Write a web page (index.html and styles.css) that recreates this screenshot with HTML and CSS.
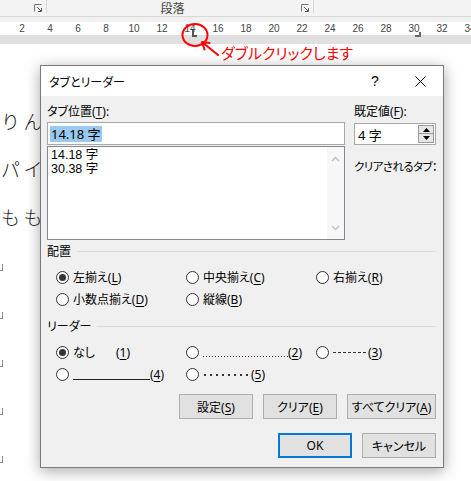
FILE: index.html
```html
<!DOCTYPE html>
<html lang="ja">
<head>
<meta charset="utf-8">
<title>タブとリーダー</title>
<link rel="stylesheet" href="styles.css">
</head>
<body>
<div class="ribbon">
  <div class="group g1"><span class="launcher"><svg width="8" height="8" viewBox="0 0 8 8"><path d="M0.5 7.5V0.5H7.5" fill="none" stroke="#777" stroke-width="1"/><path d="M3 3L7 7M4 7.5H7.5V4" fill="none" stroke="#555" stroke-width="1"/></svg></span></div>
  <div class="group g2"><span class="group-label">段落</span><span class="launcher"><svg width="8" height="8" viewBox="0 0 8 8"><path d="M0.5 7.5V0.5H7.5" fill="none" stroke="#777" stroke-width="1"/><path d="M3 3L7 7M4 7.5H7.5V4" fill="none" stroke="#555" stroke-width="1"/></svg></span></div>
</div>
<div class="ribbon-gap"></div>
<div class="ruler">
  <div class="ticks">
    <span>2</span><span>4</span><span>6</span><span>8</span><span>10</span><span>12</span><span>14</span><span>16</span><span>18</span><span>20</span><span>22</span><span>24</span><span>26</span><span>28</span><span>30</span><span>32</span><span>34</span>
  </div>
  <span class="tab-left"></span>
  <span class="tab-right"></span>
</div>
<div class="ruler-band"></div>
<div class="doc">
  <div class="line">りん</div>
  <div class="line">パイ</div>
  <div class="line">もも</div>
  <div class="line"><span class="mark"></span></div>
  <div class="line"><span class="mark"></span></div>
  <div class="line"><span class="mark"></span></div>
  <div class="line"><span class="mark"></span></div>
  <div class="line"><span class="mark"></span></div>
</div>

<svg class="annot-shapes" width="471" height="481" viewBox="0 0 471 481">
  <ellipse cx="195" cy="35" rx="12.5" ry="11" fill="none" stroke="#ff0000" stroke-width="2"/>
  <path d="M218 55L202 42M204.5 49.5L202 42L209.5 43" fill="none" stroke="#ff0000" stroke-width="2" stroke-linecap="round" stroke-linejoin="round"/>
</svg>
<div class="annot-text">ダブルクリックします</div>

<div class="dialog">
  <div class="titlebar">
    <span class="title">タブとリーダー</span>
    <span class="tb-btn help">?</span>
    <span class="tb-btn close"><svg width="11" height="11" viewBox="0 0 11 11"><path d="M0.5 0.5L10.5 10.5M10.5 0.5L0.5 10.5" stroke="#000" stroke-width="1"/></svg></span>
  </div>
  <div class="dlg-body">
    <div class="top">
      <div class="col-left">
        <div class="label">タブ位置(<u>T</u>):</div>
        <div class="input"><span class="sel">14.18 字</span></div>
        <div class="list">
          <div class="items">
            <div class="item">14.18 字</div>
            <div class="item">30.38 字</div>
          </div>
          <div class="scrollbar">
            <svg width="9" height="6" viewBox="0 0 9 6"><path d="M1 5L4.5 1.5L8 5" fill="none" stroke="#c4c4c4" stroke-width="1.5"/></svg>
            <svg width="9" height="6" viewBox="0 0 9 6"><path d="M1 1L4.5 4.5L8 1" fill="none" stroke="#c4c4c4" stroke-width="1.5"/></svg>
          </div>
        </div>
      </div>
      <div class="col-right">
        <div class="label">既定値(<u>F</u>):</div>
        <div class="spinner">
          <span class="spin-val">4 字</span>
          <div class="spin-btns">
            <span class="spin-btn"><svg width="7" height="4" viewBox="0 0 7 4"><path d="M0 4L3.5 0L7 4Z" fill="#000"/></svg></span>
            <span class="spin-btn"><svg width="7" height="4" viewBox="0 0 7 4"><path d="M0 0L3.5 4L7 0Z" fill="#000"/></svg></span>
          </div>
        </div>
        <div class="label clear-label">クリアされるタブ：</div>
      </div>
    </div>

    <div class="section"><span class="section-label">配置</span><span class="rule"></span></div>
    <div class="options">
      <div class="opt"><span class="radio checked"></span>左揃え(<u>L</u>)</div>
      <div class="opt"><span class="radio"></span>中央揃え(<u>C</u>)</div>
      <div class="opt"><span class="radio"></span>右揃え(<u>R</u>)</div>
      <div class="opt"><span class="radio"></span>小数点揃え(<u>D</u>)</div>
      <div class="opt"><span class="radio"></span>縦線(<u>B</u>)</div>
    </div>

    <div class="section section-leader"><span class="section-label">リーダー</span><span class="rule"></span></div>
    <div class="options">
      <div class="opt"><span class="radio checked"></span><span class="none-label">なし</span>(<u>1</u>)</div>
      <div class="opt"><span class="radio"></span><span class="lead lead-dots"></span>(<u>2</u>)</div>
      <div class="opt"><span class="radio"></span><span class="lead lead-dash"></span>(<u>3</u>)</div>
      <div class="opt"><span class="radio"></span><span class="lead lead-under"></span>(<u>4</u>)</div>
      <div class="opt"><span class="radio"></span><span class="lead lead-mid"></span>(<u>5</u>)</div>
    </div>

    <div class="btn-row">
      <button class="btn w74">設定(<u>S</u>)</button>
      <button class="btn w74">クリア(<u>E</u>)</button>
      <button class="btn w89">すべてクリア(<u>A</u>)</button>
    </div>
    <div class="btn-row ok-row">
      <button class="btn w74 default">OK</button>
      <button class="btn w74">キャンセル</button>
    </div>
  </div>
</div>
</body>
</html>
```

FILE: styles.css
```css
* { box-sizing: border-box; }
html, body { margin: 0; padding: 0; }
body {
  width: 471px;
  height: 481px;
  overflow: hidden;
  position: relative;
  background: #fff;
  font-family: "Noto Sans", "Noto Sans CJK JP", sans-serif;
  color: #000;
}

/* ribbon */
.ribbon {
  height: 17px;
  display: flex;
  background: #f3f3f3;
  border-bottom: 1px solid #d8d8d8;
}
.group {
  height: 13px;
  display: flex;
  align-items: flex-start;
  border-right: 1px solid #d8d8d8;
}
.g1 { width: 47px; }
.g2 { width: 267px; }
.launcher {
  display: block;
  width: 8px;
  height: 8px;
  margin: 4px 4px 0 auto;
}
.launcher svg { display: block; }
.group-label {
  flex: 1;
  text-align: center;
  padding-right: 3px;
  font-family: "Noto Sans CJK JP", sans-serif;
  font-size: 12px;
  line-height: 16px;
  color: #444;
}
.g2 .launcher { margin-left: 0; }

.ribbon-gap { height: 5px; background: #f0f0f0; }

.ruler {
  position: relative;
  height: 13px;
  background: #fff;
  z-index: 1;
}
.ticks {
  display: flex;
  padding-left: 8px;
  white-space: nowrap;
  overflow: hidden;
  width: 471px;
}
.ticks span {
  flex: 0 0 28px;
  text-align: center;
  font-family: "Liberation Sans", sans-serif;
  font-size: 10px;
  line-height: 13px;
  color: #444;
}
.tab-left {
  position: absolute;
  left: 192px;
  top: 8px;
  width: 5px;
  height: 7px;
  border-left: 2px solid #555;
  border-bottom: 2px solid #555;
}
.tab-right {
  position: absolute;
  left: 415px;
  top: 10px;
  width: 6px;
  height: 5px;
  border-right: 2px solid #666;
  border-bottom: 2px solid #666;
}
.ruler-band { height: 9px; background: #e0e0e0; }

/* document */
.doc {
  padding-top: 52px;
}
.line {
  height: 48px;
  display: flex;
  align-items: center;
  padding-left: 1px;
  font-family: "Noto Sans CJK JP", sans-serif;
  font-weight: 300;
  font-size: 19px;
  letter-spacing: 3.5px;
  color: #222;
  white-space: nowrap;
}
.mark {
  display: block;
  width: 3px;
  height: 7px;
  margin-left: -1px;
  margin-top: 6px;
  border-right: 1px solid #8a8a8a;
  border-bottom: 1px solid #8a8a8a;
}

/* annotation */
.annot-shapes {
  position: absolute;
  left: 0;
  top: 0;
  pointer-events: none;
  z-index: 2;
}
.annot-text {
  position: absolute;
  left: 221px;
  top: 44px;
  font-family: "Noto Sans CJK JP", sans-serif;
  font-size: 15px;
  line-height: 18px;
  font-feature-settings: "palt";
  color: #ff0000;
  white-space: nowrap;
}

/* dialog */
.dialog {
  position: absolute;
  left: 40px;
  top: 65px;
  width: 404px;
  height: 403px;
  border: 1px solid #7a7a7a;
  background: #f0f0f0;
  box-shadow: 0 3px 14px rgba(0, 0, 0, 0.35);
  font-family: "Noto Sans", "Noto Sans CJK JP", sans-serif;
  font-size: 12px;
  z-index: 3;
}
.titlebar {
  height: 30px;
  background: #fff;
  display: flex;
  align-items: center;
}
.title {
  flex: 1;
  padding-left: 8px;
  font-size: 12px;
  font-family: "Noto Sans CJK JP", sans-serif;
  font-feature-settings: "palt";
}
.tb-btn {
  width: 46px;
  height: 30px;
  display: flex;
  align-items: center;
  justify-content: center;
}
.help { font-size: 14px; font-family: "Liberation Sans", sans-serif; padding-left: 2px; }
.close svg { display: block; }

.dlg-body {
  padding: 8px 7px 0 6px;
}
.top {
  display: grid;
  grid-template-columns: 298px 82px;
  column-gap: 9px;
}
.label {
  line-height: 16px;
  height: 16px;
  font-size: 12px;
  white-space: nowrap;
  font-feature-settings: "palt";
}
u { text-underline-offset: 2px; text-decoration-thickness: 1px; }

.input {
  margin-top: 2px;
  height: 23px;
  border: 1px solid #a8a8a8;
  background: #fff;
  padding: 2px 0 0 2px;
  font-size: 13px;
}
.sel {
  display: inline-block;
  background: #99c9ef;
  line-height: 16px;
  padding: 0 1px;
}
.list {
  margin-top: 1px;
  height: 94px;
  border: 1px solid #828790;
  background: #fff;
  display: flex;
}
.items {
  flex: 1;
  padding: 1px 0 0 3px;
  font-family: "Liberation Sans", "Noto Sans CJK JP", sans-serif;
  font-size: 12.5px;
}
.item { line-height: 14px; height: 14px; }
.scrollbar {
  width: 17px;
  background: #f7f7f7;
  display: flex;
  flex-direction: column;
  justify-content: space-between;
  align-items: center;
  padding: 9px 0 8px;
}
.scrollbar svg { display: block; }

.spinner {
  margin-top: 3px;
  height: 22px;
  border: 1px solid #a8a8a8;
  background: #fff;
  display: flex;
  align-items: center;
}
.spin-val { flex: 1; padding-left: 3px; font-size: 13px; }
.spin-btns {
  width: 16px;
  margin-right: 1px;
  display: flex;
  flex-direction: column;
}
.spin-btn {
  height: 9px;
  border: 1px solid #9a9a9a;
  background: #e6e6e6;
  display: flex;
  align-items: center;
  justify-content: center;
}
.spin-btn + .spin-btn { border-top: none; }
.spin-btn svg { display: block; }
.clear-label { margin-top: 14px; letter-spacing: -0.6px; font-size: 11.5px; }

.section {
  margin-top: 3px;
  display: flex;
  align-items: center;
  height: 16px;
}
.section-label { line-height: 16px; white-space: nowrap; font-family: "Noto Sans CJK JP", sans-serif; font-feature-settings: "palt"; }
.rule {
  flex: 1;
  height: 1px;
  margin-left: 6px;
  background: #dcdcdc;
}
.section-leader { margin-top: 8px; }

.options {
  margin-top: 7px;
  padding-left: 9px;
  display: grid;
  grid-template-columns: 130px 130px 130px;
  grid-auto-rows: 22px;
}
.opt {
  display: flex;
  align-items: center;
  white-space: nowrap;
  font-size: 12px;
  font-feature-settings: "palt";
}
.radio {
  width: 13px;
  height: 13px;
  border: 1px solid #333;
  border-radius: 50%;
  background: #fff;
  margin-right: 4px;
  display: flex;
  align-items: center;
  justify-content: center;
}
.radio.checked::after {
  content: "";
  width: 7px;
  height: 7px;
  border-radius: 50%;
  background: #333;
}
.none-label { width: 43px; }
.lead { display: block; height: 14px; }
.lead-dots {
  width: 85px;
  background-image: repeating-linear-gradient(to right, #4a3218 0 1px, transparent 1px 3px);
  background-repeat: no-repeat;
  background-position: 0 11px;
  background-size: 100% 1px;
}
.lead-dash {
  width: 35px;
  background-image: repeating-linear-gradient(to right, #333 0 3px, transparent 3px 5px);
  background-repeat: no-repeat;
  background-position: 0 7px;
  background-size: 100% 1px;
}
.lead-under {
  width: 77px;
  background-image: linear-gradient(#222, #222);
  background-repeat: no-repeat;
  background-position: 0 12px;
  background-size: 100% 1px;
}
.lead-mid {
  width: 48px;
  background-image: repeating-linear-gradient(to right, #333 0 2px, transparent 2px 6px);
  background-repeat: no-repeat;
  background-position: 1px 7px;
  background-size: 100% 2px;
}

.btn-row {
  margin-top: 9px;
  display: flex;
  justify-content: flex-end;
  gap: 10px;
}
.ok-row { margin-top: 14px; }
.btn {
  height: 25px;
  border: 1px solid #adadad;
  background: #e1e1e1;
  font-family: "Noto Sans", "Noto Sans CJK JP", sans-serif;
  font-size: 12px;
  font-feature-settings: "palt";
  color: #000;
  padding: 0;
  white-space: nowrap;
}
.w74 { width: 74px; }
.w89 { width: 89px; }
.btn.default { border: 2px solid #0078d7; }
```
